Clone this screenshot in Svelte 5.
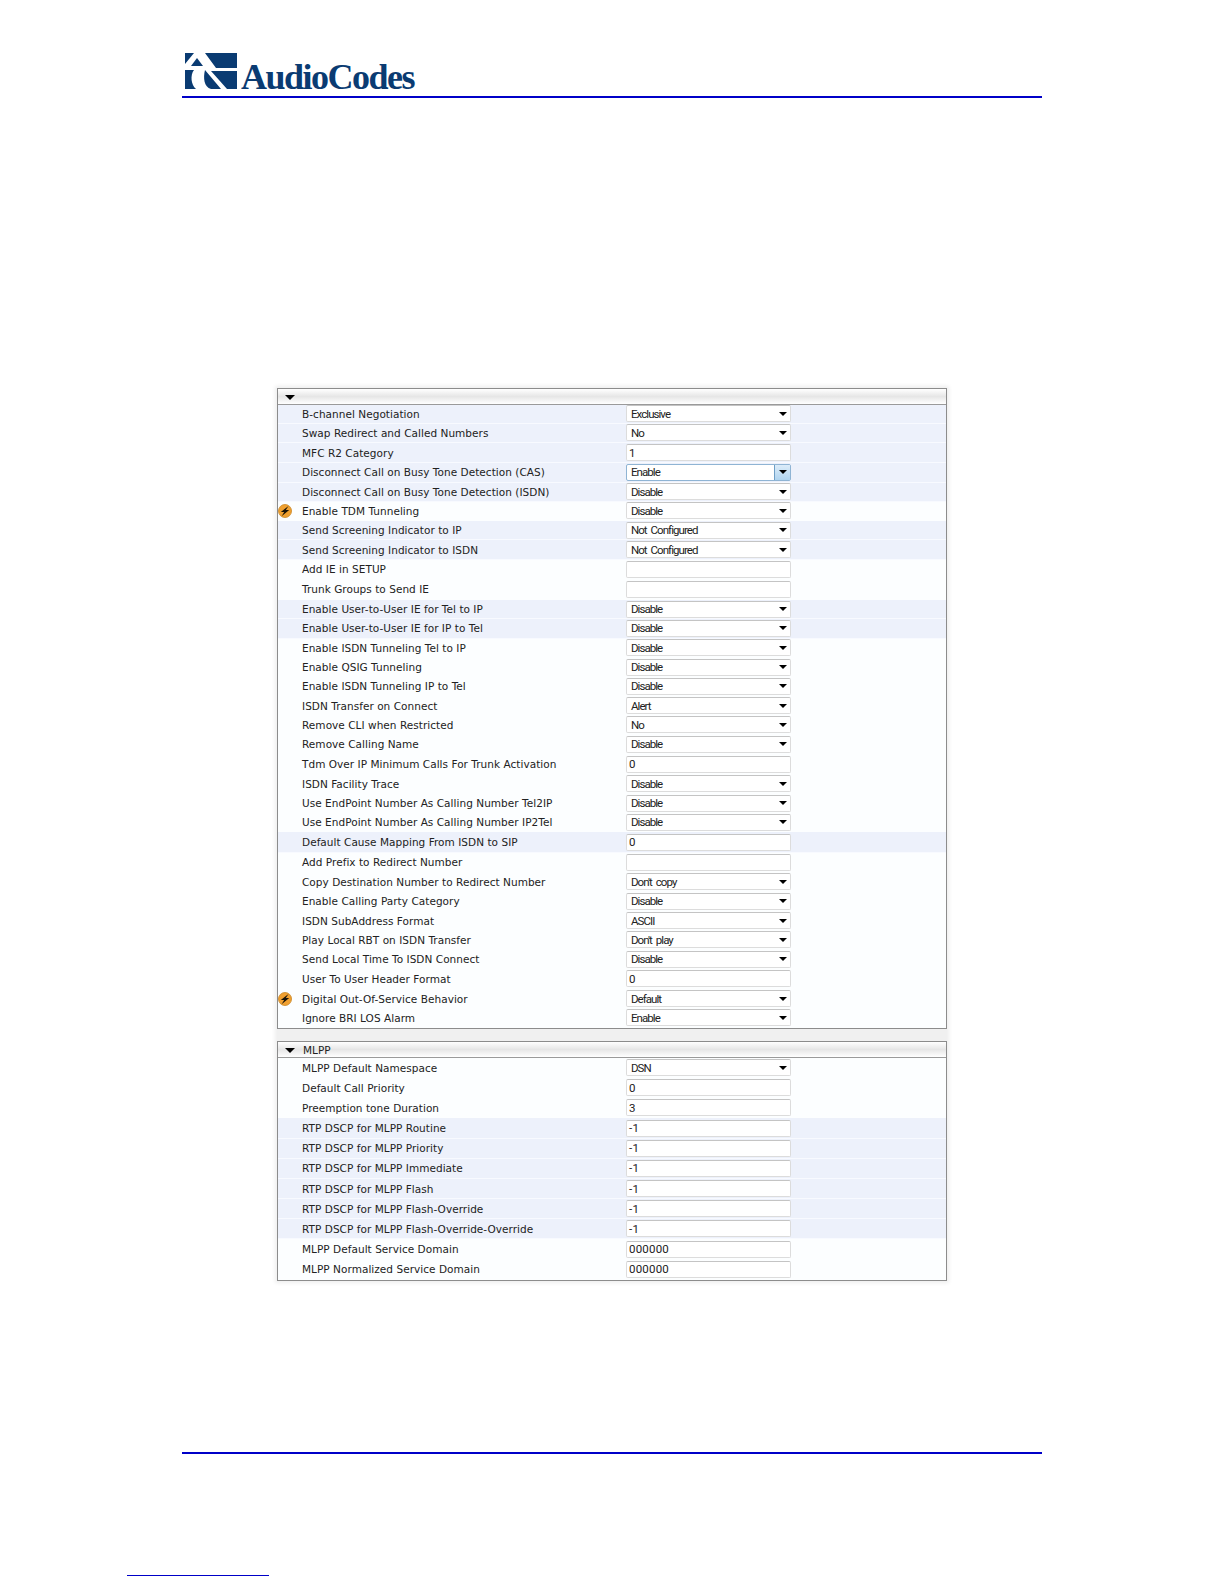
<script>
	const general = [
		{ label: 'B-channel Negotiation', value: 'Exclusive', blue: true },
		{ label: 'Swap Redirect and Called Numbers', value: 'No', blue: true },
		{ label: 'MFC R2 Category', value: '1', blue: true, text: true },
		{ label: 'Disconnect Call on Busy Tone Detection (CAS)', value: 'Enable', blue: true, focus: true },
		{ label: 'Disconnect Call on Busy Tone Detection (ISDN)', value: 'Disable', blue: true },
		{ label: 'Enable TDM Tunneling', value: 'Disable', bolt: true },
		{ label: 'Send Screening Indicator to IP', value: 'Not Configured', blue: true },
		{ label: 'Send Screening Indicator to ISDN', value: 'Not Configured', blue: true },
		{ label: 'Add IE in SETUP', value: '', text: true },
		{ label: 'Trunk Groups to Send IE', value: '', text: true },
		{ label: 'Enable User-to-User IE for Tel to IP', value: 'Disable', blue: true },
		{ label: 'Enable User-to-User IE for IP to Tel', value: 'Disable', blue: true },
		{ label: 'Enable ISDN Tunneling Tel to IP', value: 'Disable' },
		{ label: 'Enable QSIG Tunneling', value: 'Disable' },
		{ label: 'Enable ISDN Tunneling IP to Tel', value: 'Disable' },
		{ label: 'ISDN Transfer on Connect', value: 'Alert' },
		{ label: 'Remove CLI when Restricted', value: 'No' },
		{ label: 'Remove Calling Name', value: 'Disable' },
		{ label: 'Tdm Over IP Minimum Calls For Trunk Activation', value: '0', text: true },
		{ label: 'ISDN Facility Trace', value: 'Disable' },
		{ label: 'Use EndPoint Number As Calling Number Tel2IP', value: 'Disable' },
		{ label: 'Use EndPoint Number As Calling Number IP2Tel', value: 'Disable' },
		{ label: 'Default Cause Mapping From ISDN to SIP', value: '0', blue: true, text: true },
		{ label: 'Add Prefix to Redirect Number', value: '', text: true },
		{ label: 'Copy Destination Number to Redirect Number', value: "Don't copy" },
		{ label: 'Enable Calling Party Category', value: 'Disable' },
		{ label: 'ISDN SubAddress Format', value: 'ASCII' },
		{ label: 'Play Local RBT on ISDN Transfer', value: "Don't play" },
		{ label: 'Send Local Time To ISDN Connect', value: 'Disable' },
		{ label: 'User To User Header Format', value: '0', text: true },
		{ label: 'Digital Out-Of-Service Behavior', value: 'Default', bolt: true },
		{ label: 'Ignore BRI LOS Alarm', value: 'Enable' }
	];

	const mlpp = [
		{ label: 'MLPP Default Namespace', value: 'DSN', text: false },
		{ label: 'Default Call Priority', value: '0', text: true },
		{ label: 'Preemption tone Duration', value: '3', text: true },
		{ label: 'RTP DSCP for MLPP Routine', value: '-1', blue: true, text: true },
		{ label: 'RTP DSCP for MLPP Priority', value: '-1', blue: true, text: true },
		{ label: 'RTP DSCP for MLPP Immediate', value: '-1', blue: true, text: true },
		{ label: 'RTP DSCP for MLPP Flash', value: '-1', blue: true, text: true },
		{ label: 'RTP DSCP for MLPP Flash-Override', value: '-1', blue: true, text: true },
		{ label: 'RTP DSCP for MLPP Flash-Override-Override', value: '-1', blue: true, text: true },
		{ label: 'MLPP Default Service Domain', value: '000000', text: true },
		{ label: 'MLPP Normalized Service Domain', value: '000000', text: true }
	];

	const sections = [
		{ title: '', rows: general },
		{ title: 'MLPP', rows: mlpp, tall: true }
	];
</script>

<div class="page">
	<header class="top">
		<div class="logo">
			<svg class="mark" viewBox="0 0 52 36" width="52" height="36" aria-hidden="true">
				<path fill="#0a3b72" d="M0 0H9L0 11ZM20 0H52V15H31ZM12 5 18 13H6ZM0 17H9C5 22 6 32 11 36H0ZM20 17 36 36H26C19 34 18 25 20 17ZM26 18H52V36H42Z" />
			</svg>
			<span class="brand">AudioCodes</span>
		</div>
	</header>

	<main class="panels">
		{#each sections as section}
			<section class="panel">
				<div class="panel-head">
					<span class="caret"></span>
					<span class="panel-title">{section.title}</span>
				</div>
				{#each section.rows as row}
					<div class="row" class:blue={row.blue} class:input-row={row.text || section.tall}>
						<span class="flag">
							{#if row.bolt}
								<svg viewBox="0 0 14 14" width="14" height="14" aria-hidden="true">
									<circle cx="7" cy="7" r="6.500" fill="#f0a030" stroke="#c98420" stroke-width="0.800" />
									<path d="M10.500 2 2.800 8H6.200L3.600 12.200 11.200 6H7.800Z" fill="#1a1408" />
								</svg>
							{/if}
						</span>
						<span class="label">{row.label}</span>
						<div class="field" class:focus={row.focus} class:plain={row.text}>
							<span class="value">{row.value}</span>
							{#if !row.text}
								<span class="drop"><i></i></span>
							{/if}
						</div>
					</div>
				{/each}
			</section>
		{/each}
	</main>

	<footer class="bottom">
		<div class="note-rule"></div>
	</footer>
</div>

<style>
	:global(body) {
		background: #fff;
	}

	.page {
		width: 1224px;
		height: 1584px;
		overflow: hidden;
		display: flex;
		flex-direction: column;
	}

	.top {
		height: 43px;
		margin: 53px 182px 0;
		width: 860px;
		border-bottom: 2px solid #0000c8;
	}

	.logo {
		display: flex;
		align-items: flex-start;
		margin-left: 3px;
		height: 43px;
	}

	.mark {
		flex: none;
	}

	.brand {
		margin: 3px 0 0 4px;
		font-family: 'Liberation Serif', serif;
		font-weight: bold;
		font-size: 36px;
		line-height: 42px;
		letter-spacing: -1.500px;
		color: #0a3b72;
	}

	.panels {
		margin: 289.500px 0 0 277px;
		width: 670px;
		display: flex;
		flex-direction: column;
		gap: 12px;
		background: #f0f0f0;
		box-shadow: 0 0 4px 2px #eee;
	}

	.panel {
		border: 1px solid #8c8c8c;
		background: #fcfeff;
	}

	.panel-head {
		height: 15px;
		display: flex;
		align-items: center;
		gap: 8px;
		padding-left: 7px;
		background: linear-gradient(#fff, #e6e6e6 50%, #fff);
		border-bottom: 1px solid #9a9a9a;
	}

	.caret {
		width: 0;
		height: 0;
		border-left: 5px solid transparent;
		border-right: 5px solid transparent;
		border-top: 5px solid #000;
		margin-top: 2px;
	}

	.panel-title,
	.label {
		font-family: 'DejaVu Sans', sans-serif;
		font-size: 10.500px;
		letter-spacing: 0.040px;
		color: #222;
		white-space: nowrap;
	}

	.row {
		height: 19.300px;
		display: flex;
		align-items: center;
		box-sizing: border-box;
		border-bottom: 1px solid transparent;
	}

	.row.input-row {
		height: 20.170px;
	}

	.row.blue {
		background: #edf1fb;
		border-bottom-color: #f8faff;
	}

	.flag {
		width: 24px;
		box-sizing: border-box;
		display: flex;
		flex: none;
	}

	.label {
		width: 324px;
		flex: none;
	}

	.field {
		width: 165px;
		height: 17px;
		box-sizing: border-box;
		flex: none;
		display: flex;
		align-items: center;
		justify-content: space-between;
		background: #fff;
		border: 1px solid #dcdcdc;
		border-top-color: #c4c4c4;
		border-radius: 2px;
		padding-left: 4px;
	}

	.field.plain {
		padding-left: 2px;
	}

	.field.focus {
		border-color: #8fb4d4;
	}

	.value {
		font-family: Roboto, sans-serif;
		font-size: 11.500px;
		letter-spacing: -0.950px;
		word-spacing: 2px;
		color: #222;
		white-space: nowrap;
	}

	.plain .value {
		letter-spacing: 0.200px;
	}

	.drop {
		width: 15px;
		height: 100%;
		display: flex;
		align-items: center;
		justify-content: center;
		flex: none;
	}

	.focus .drop {
		background: linear-gradient(#dcecf9, #b0d4ef);
		border-left: 1px solid #6f9fc6;
	}

	.drop i {
		width: 0;
		height: 0;
		border-left: 4px solid transparent;
		border-right: 4px solid transparent;
		border-top: 4px solid #000;
	}

	.bottom {
		margin: 171px 0 0 182px;
		border-top: 2px solid #0000c8;
		width: 860px;
	}

	.note-rule {
		margin: 121px 0 0 -55px;
		width: 142px;
		border-top: 1px solid #0000c8;
	}
</style>
